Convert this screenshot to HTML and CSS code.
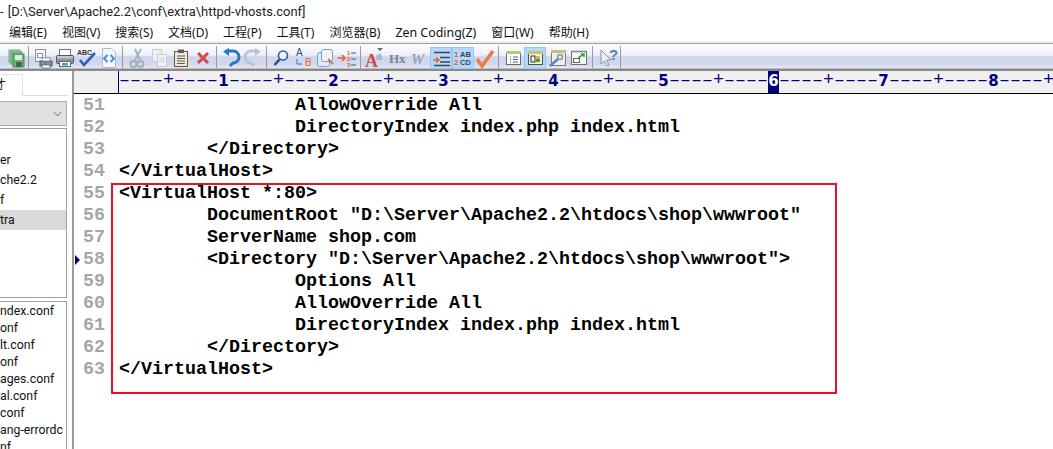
FILE: index.html
```html
<!DOCTYPE html>
<html lang="zh-CN">
<head>
<meta charset="utf-8">
<title>httpd-vhosts.conf</title>
<link rel="stylesheet" href="styles.css">
</head>
<body>
<div class="app">
  <div class="titlebar">- [D:\Server\Apache2.2\conf\extra\httpd-vhosts.conf]</div>
  <nav class="menubar">
    <span>编辑(E)</span><span>视图(V)</span><span>搜索(S)</span><span>文档(D)</span><span>工程(P)</span><span>工具(T)</span><span>浏览器(B)</span><span class="zen">Zen Coding(Z)</span><span>窗口(W)</span><span>帮助(H)</span>
  </nav>
  <div class="toolbar">
    <div class="tb"><svg viewBox="0 0 22 22"><rect x="5" y="3" width="11" height="12" fill="#a5d4ae" stroke="#6fa87c"/><rect x="7" y="5" width="11" height="12" fill="#8fc79a" stroke="#5f9a6c"/><rect x="9" y="7" width="11" height="13" fill="#6fb27e" stroke="#4a8a58"/><rect x="11" y="8" width="7" height="5" fill="#d8efdc"/><rect x="12" y="15" width="6" height="5" fill="#3d6a48"/></svg></div>
    <i class="sep"></i>
    <div class="tb"><svg viewBox="0 0 22 22"><rect x="3.500" y="2.500" width="10" height="12" fill="#f4f6fa" stroke="#8b93a5"/><rect x="5.500" y="6.500" width="5" height="4" fill="#fff" stroke="#8b93a5"/><rect x="8" y="14" width="12" height="5" fill="#8a8f99" stroke="#555"/><rect x="10" y="11" width="8" height="3" fill="#fff" stroke="#777" stroke-width=".7"/><rect x="10" y="18" width="8" height="3" fill="#fff" stroke="#555" stroke-width=".7"/><rect x="12" y="15" width="3" height="2" fill="#2fa4a4"/></svg></div>
    <div class="tb"><svg viewBox="0 0 22 22"><rect x="5.500" y="2.500" width="11" height="6" fill="#fff" stroke="#777"/><rect x="2.500" y="8.500" width="17" height="8" rx="1" fill="#8d929b" stroke="#55585e"/><rect x="3" y="9" width="16" height="2.500" fill="#c4c7cc"/><rect x="5.500" y="14.500" width="11" height="5" fill="#fff" stroke="#666"/><rect x="8" y="16" width="6" height="2.500" fill="#2fa4c4"/></svg></div>
    <div class="tb"><svg viewBox="0 0 22 22"><text x="1" y="8" class="abc">ABC</text><path d="M4 13l4 5L19 6" fill="none" stroke="#2f62b4" stroke-width="2.600"/></svg></div>
    <div class="tb"><svg viewBox="0 0 22 22"><path d="M4.500 1.500h9l4 4v15h-13z" fill="#f4f6fa" stroke="#b4bbc8"/><path d="M9.500 8l-3.500 3.500 3.500 3.500M12.500 8l3.500 3.500-3.500 3.500" fill="none" stroke="#3f8fe0" stroke-width="2"/></svg></div>
    <i class="sep"></i>
    <div class="tb"><svg viewBox="0 0 22 22"><path d="M15 2l-6 11M9 2l5 11" stroke="#aab2bf" stroke-width="2" fill="none"/><circle cx="7.500" cy="17" r="3" fill="none" stroke="#a5aebc" stroke-width="2"/><circle cx="14.500" cy="17" r="3" fill="none" stroke="#a5aebc" stroke-width="2"/></svg></div>
    <div class="tb"><svg viewBox="0 0 22 22"><rect x="4.500" y="2.500" width="9" height="12" fill="#eceff4" stroke="#c6cbd4"/><rect x="9.500" y="7.500" width="9" height="12" fill="#f2f4f8" stroke="#c6cbd4"/><path d="M11 11h6M11 13h6M11 15h6" stroke="#cdd2da"/></svg></div>
    <div class="tb"><svg viewBox="0 0 22 22"><rect x="4.500" y="4.500" width="13" height="15" fill="#efe8d4" stroke="#6f5a36"/><rect x="8" y="2.500" width="6" height="3.500" fill="#5c5c5c"/><path d="M7 9h8M7 11.500h8M7 14h8M7 16.500h8" stroke="#5a5a5a"/></svg></div>
    <div class="tb"><svg viewBox="0 0 22 22"><path d="M6 6l10 10M16 6L6 16" stroke="#d04a4a" stroke-width="3"/></svg></div>
    <i class="sep"></i>
    <div class="tb"><svg viewBox="0 0 22 22"><path d="M6 4h7a5.500 5.500 0 0 1 0 12l-3 3" fill="none" stroke="#2f74c0" stroke-width="3"/><path d="M9 1v8L3 4.500z" fill="#2f74c0"/></svg></div>
    <div class="tb"><svg viewBox="0 0 22 22"><path d="M16 4H9a5.500 5.500 0 0 0 0 12l3 3" fill="none" stroke="#b9c6d2" stroke-width="3"/><path d="M13 1v8l6-4.500z" fill="#b9c6d2"/></svg></div>
    <i class="sep"></i>
    <div class="tb"><svg viewBox="0 0 22 22"><circle cx="13" cy="8.500" r="4.500" fill="#eaf4fc" stroke="#2a5f9e" stroke-width="1.600"/><path d="M9.500 12.500L4.500 18" stroke="#234f86" stroke-width="2.600"/></svg></div>
    <div class="tb"><svg viewBox="0 0 22 22"><text x="4" y="9" class="rep">A</text><text x="13" y="19" class="rep red">B</text><path d="M5 12v5h5" fill="none" stroke="#3b6fb0"/></svg></div>
    <div class="tb"><svg viewBox="0 0 22 22"><rect x="3.500" y="5.500" width="12" height="14" rx="2" fill="#dfe8f5" stroke="#7f9cc4"/><rect x="7.500" y="2.500" width="11" height="12" rx="2" fill="#eef3fa" stroke="#7f9cc4"/><path d="M14 12l5 5" stroke="#c97b3a" stroke-width="2"/></svg></div>
    <div class="tb"><svg viewBox="0 0 22 22"><path d="M2 11h6M6 8l3 3-3 3" fill="none" stroke="#e8622c" stroke-width="1.600"/><text x="11" y="8" class="num">1</text><text x="11" y="14" class="num">2</text><text x="11" y="20" class="num">3</text><path d="M15 6h5M15 12h5M15 18h5" stroke="#3a5a8c"/></svg></div>
    <i class="sep"></i>
    <div class="tb"><svg viewBox="0 0 22 22"><text x="1" y="20" class="fa">A</text><text x="12" y="13" class="fa2">a</text><path d="M13 1h6l-3 3z" fill="#666"/></svg></div>
    <div class="tb"><svg viewBox="0 0 22 22"><text x="3" y="16" class="hx">Hx</text></svg></div>
    <div class="tb"><svg viewBox="0 0 22 22"><text x="3" y="17" class="wd">W</text></svg></div>
    <div class="tb on"><svg viewBox="0 0 22 22"><path d="M4 5.500h16M10 10.500h10M10 15h10M4 18.500h16" stroke="#3a4658" stroke-width="1.300"/><path d="M3 13h5M6 10.500l3 2.500-3 2.500" fill="none" stroke="#e8622c" stroke-width="1.500"/></svg></div>
    <div class="tb on"><svg viewBox="0 0 22 22"><text x="2" y="10" class="ln">1</text><text x="2" y="18" class="ln">2</text><text x="8" y="10" class="ab">AB</text><text x="8" y="18" class="ab">CD</text></svg></div>
    <div class="tb"><svg viewBox="0 0 22 22"><path d="M3 12l5 7L19 4" fill="none" stroke="#ee7b3f" stroke-width="3.600"/></svg></div>
    <i class="sep"></i>
    <div class="tb"><svg viewBox="0 0 22 22"><rect x="4.500" y="4.500" width="14" height="13" fill="#fff" stroke="#6a6f5c"/><rect x="4" y="4" width="15" height="3" fill="#bfc47c"/><path d="M8 10h1M11 10h5M8 12.500h1M11 12.500h5M8 15h1M11 15h5" stroke="#4466aa"/></svg></div>
    <div class="tb on"><svg viewBox="0 0 22 22"><rect x="4.500" y="4.500" width="14" height="13" fill="#f2f2e8" stroke="#4e5344"/><rect x="4" y="4" width="15" height="3" fill="#bfc47c"/><rect x="7" y="9" width="4" height="6" fill="none" stroke="#333"/><rect x="12" y="9" width="4" height="3" fill="#e8b52c"/><rect x="12" y="12" width="4" height="3" fill="#4a9a44"/></svg></div>
    <div class="tb"><svg viewBox="0 0 22 22"><rect x="5.500" y="3.500" width="14" height="15" fill="#eceef0" stroke="#7d8068"/><rect x="5" y="3" width="15" height="3" fill="#bfc47c"/><circle cx="14" cy="10" r="2.500" fill="none" stroke="#8a96a8" stroke-width="1.500"/><path d="M12 12l-8 7" stroke="#4f86c8" stroke-width="2.400"/></svg></div>
    <div class="tb"><svg viewBox="0 0 22 22"><rect x="3.500" y="4.500" width="15" height="13" fill="#f6f6f2" stroke="#6f6f66"/><path d="M4 4.500h14" stroke="#9a9a8a" stroke-dasharray="2 1" stroke-width="2"/><rect x="5.500" y="11.500" width="6" height="4" fill="#fff" stroke="#666"/><path d="M10 11l6-4M13 7h3v3" fill="none" stroke="#34a84a" stroke-width="1.600"/></svg></div>
    <i class="sep"></i>
    <div class="tb"><svg viewBox="0 0 22 22"><path d="M5 3v14l3.500-3 2.500 5 2-1-2.500-5H15z" fill="#eef1f5" stroke="#8a93a0"/><text x="13" y="13" class="qm">?</text></svg></div>
    <i class="sep"></i>
  </div>
  <div class="workspace">
    <aside class="sidebar">
      <div class="tabs"><span class="tab">才</span></div>
      <div class="combo"><svg viewBox="0 0 10 6"><path d="M1 1l4 4 4-4" fill="none" stroke="#555"/></svg></div>
      <ul class="panel tree">
        <li>er</li><li>che2.2</li><li>f</li><li class="sel">tra</li>
      </ul>
      <ul class="panel files">
        <li>ndex.conf</li><li>onf</li><li>lt.conf</li><li>onf</li><li>ages.conf</li><li>al.conf</li><li>conf</li><li>ang-errordc</li><li>nf</li>
      </ul>
    </aside>
    <main class="editor">
      <div class="ruler"><div class="ruler-gutter"></div><div class="ruler-track">––––+––––<b>1</b>––––+––––<b>2</b>––––+––––<b>3</b>––––+––––<b>4</b>––––+––––<b>5</b>––––+––––<b class="cur">6</b>––––+––––<b>7</b>––––+––––<b>8</b>––––+––––</div></div>
      <div class="code">
        <div class="line"><span class="no">51</span><span class="src">                AllowOverride All</span></div>
        <div class="line"><span class="no">52</span><span class="src">                DirectoryIndex index.php index.html</span></div>
        <div class="line"><span class="no">53</span><span class="src">        &lt;/Directory&gt;</span></div>
        <div class="line"><span class="no">54</span><span class="src">&lt;/VirtualHost&gt;</span></div>
        <div class="line"><span class="no">55</span><span class="src">&lt;VirtualHost *:80&gt;</span></div>
        <div class="line"><span class="no">56</span><span class="src">        DocumentRoot "D:\Server\Apache2.2\htdocs\shop\wwwroot"</span></div>
        <div class="line"><span class="no">57</span><span class="src">        ServerName shop.com</span></div>
        <div class="line caret"><span class="no">58</span><span class="src">        &lt;Directory "D:\Server\Apache2.2\htdocs\shop\wwwroot"&gt;</span></div>
        <div class="line"><span class="no">59</span><span class="src">                Options All</span></div>
        <div class="line"><span class="no">60</span><span class="src">                AllowOverride All</span></div>
        <div class="line"><span class="no">61</span><span class="src">                DirectoryIndex index.php index.html</span></div>
        <div class="line"><span class="no">62</span><span class="src">        &lt;/Directory&gt;</span></div>
        <div class="line"><span class="no">63</span><span class="src">&lt;/VirtualHost&gt;</span></div>
        <div class="redbox"></div>
      </div>
    </main>
  </div>
</div>
</body>
</html>
```
FILE: styles.css
```css
* { box-sizing: border-box; }
html, body { margin: 0; padding: 0; }
body { width: 1053px; height: 449px; overflow: hidden; background: #fff; font-family: "Noto Sans", "Noto Sans CJK SC", sans-serif; color: #000; }
.app { display: flex; flex-direction: column; height: 449px; }
.titlebar { height: 22px; font: 12.900px/23px Roboto, "Noto Sans CJK SC", sans-serif; word-spacing: 1px; white-space: nowrap; color: #222; }
.menubar { height: 19px; display: flex; gap: 15px; padding-left: 9px; font-size: 12px; line-height: 21px; color: #111; white-space: nowrap; }
.zen { font-size: 12.400px; }
.toolbar { height: 30px; display: flex; align-items: center; padding-left: 4px; border-top: 2px solid #efefef; position: relative;
  background: linear-gradient(#a0a0a0 0, #a0a0a0 1px, #fbfcff 1px, #eef1fa 12px, #cdd5ec 14px, #d3daef 22px, #e8ebf6 25px, #8a8a8a 26px, #8a8a8a 28px); }
.tb { width: 22px; height: 22px; flex: none; margin-top: 1px; }
.tb svg { display: block; width: 22px; height: 22px; }
.tb.on { background: #b5d8f8; box-shadow: inset 0 0 0 1px #92c9f6; }
.sep { width: 6px; height: 24px; flex: none; position: relative; margin-top: 1px; }
.sep::after { content: ""; position: absolute; left: 2px; top: 0; width: 1px; height: 24px; background: #9a9aa2; }
.abc { font: bold 7px "Liberation Sans", sans-serif; fill: #333; }
.rep { font: 10px "Liberation Sans", sans-serif; fill: #2f4f7f; }
.rep.red { fill: #e8622c; }
.num { font: bold 6px "Liberation Sans", sans-serif; fill: #e8622c; }
.fa { font: bold 18px "Liberation Serif", serif; fill: #c8504a; }
.fa2 { font: bold 11px "Liberation Sans", sans-serif; fill: #9aa4c8; }
.hx { font: bold 13px "Liberation Serif", serif; fill: #7c8898; }
.wd { font: italic bold 15px "Liberation Serif", serif; fill: #9aa2ae; }
.ln { font: bold 8px "Liberation Sans", sans-serif; fill: #e8622c; }
.ab { font: bold 7.500px "Liberation Sans", sans-serif; fill: #3a4658; }
.qm { font: bold 15px "Liberation Sans", sans-serif; fill: #4a7cc0; }
.workspace { flex: 1; display: flex; min-height: 0; }
.sidebar { width: 72px; flex: none; padding-right: 5px; background: #fff; display: flex; flex-direction: column; overflow: hidden; font-family: Roboto, "Noto Sans CJK SC", sans-serif; }
.tabs { height: 25px; padding-top: 3px; border-bottom: 1px solid #dcdcdc; margin-right: -1px; }
.tab { display: block; width: 23px; height: 22px; border: 1px solid #e4e4e4; border-left: 0; border-bottom: 0; font-size: 12px; line-height: 20px; color: #222; text-indent: -6px; background: #fff; overflow: hidden; }
.combo { height: 25px; margin-top: 5px; background: #e1e1e1; border: 1px solid #adadad; border-left: 0; display: flex; align-items: center; justify-content: flex-end; padding-right: 4px; }
.combo svg { width: 9px; height: 6px; }
.panel { list-style: none; margin: 0; padding: 0; border: 1px solid #a0a0a0; border-left: 0; font-size: 12.300px; color: #111; white-space: nowrap; overflow: hidden; }
.tree { height: 170px; margin-top: 2px; padding-top: 21px; }
.tree li { height: 20px; line-height: 20px; }
.tree .sel { background: #d9d9d9; }
.files { flex: 1; margin-top: 3px; padding-top: 1px; border-bottom: 0; }
.files li { height: 17px; line-height: 17px; }
.editor { flex: 1; min-width: 0; border-left: 2px solid #9a9a9a; display: flex; flex-direction: column; overflow: hidden; margin-top: -1px; }
.ruler { height: 24px; flex: none; display: flex; background: #f0f0f0; border-bottom: 1px solid #000; }
.ruler-gutter { width: 44px; flex: none; border-right: 1px solid #000080; margin-left: 1px; }
.ruler-track { font: 18.330px/22px "Liberation Mono", monospace; color: #000080; white-space: pre; }
.ruler-track b { display: inline-block; width: 11px; height: 23px; text-align: center; font: bold 15px/23px "DejaVu Sans", sans-serif; vertical-align: top; }
.ruler-track .cur { background: #000080; color: #fff; }
.code { position: relative; flex: 1; padding-top: 1px; font: bold 18.330px/22px "Liberation Mono", monospace; }
.line { height: 22px; display: flex; position: relative; white-space: pre; }
.no { width: 31px; margin-right: 14px; flex: none; text-align: right; color: #a6a6a6; }
.line.caret::before { content: ""; position: absolute; left: 1px; top: 6px; border-left: 5px solid #000080; border-top: 5px solid transparent; border-bottom: 5px solid transparent; }
.redbox { position: absolute; left: 37px; top: 89px; width: 726px; height: 211px; border: 2px solid #e81123; }
```
